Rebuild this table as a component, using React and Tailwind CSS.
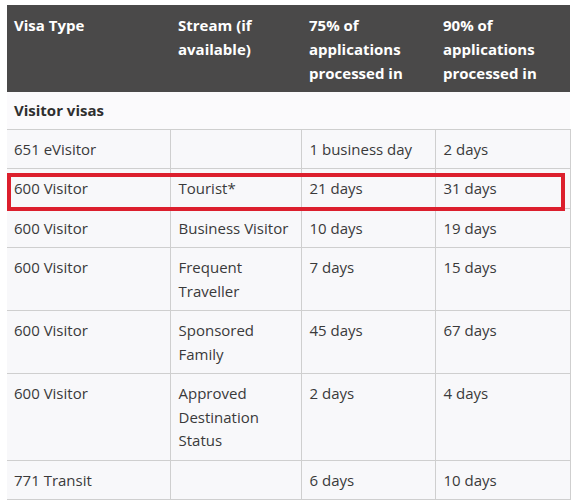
export default function App() {
  const rows = [
    ["651 eVisitor", "", "1 business day", "2 days"],
    ["600 Visitor", "Tourist*", "21 days", "31 days"],
    ["600 Visitor", "Business Visitor", "10 days", "19 days"],
    ["600 Visitor", "Frequent Traveller", "7 days", "15 days"],
    ["600 Visitor", "Sponsored Family", "45 days", "67 days"],
    ["600 Visitor", "Approved Destination Status", "2 days", "4 days"],
    ["771 Transit", "", "6 days", "10 days"],
  ];
  return (
    <div className="w-[572px] h-[503px] bg-white overflow-hidden pt-[5px] pl-[7px]" style={{ fontFamily: '"Open Sans", sans-serif' }}>
      <div className="relative w-[563px]">
        <table className="w-[563px] border-collapse table-fixed text-[15px] leading-[23.5px] text-[#3a3a3a]">
          <colgroup>
            <col className="w-[163px]" />
            <col className="w-[131px]" />
            <col className="w-[134px]" />
            <col className="w-[135px]" />
          </colgroup>
          <thead>
            <tr className="bg-[#4a4949] text-white font-bold align-top leading-6">
              <th className="text-left font-bold pl-[7px] pr-2 pt-2 pb-[7px]">Visa Type</th>
              <th className="text-left font-bold pl-2 pr-2 pt-2 pb-[7px]">Stream (if available)</th>
              <th className="text-left font-bold pl-2 pr-2 pt-2 pb-[7px]">75% of applications processed in</th>
              <th className="text-left font-bold pl-2 pr-2 pt-2 pb-[7px]">90% of applications processed in</th>
            </tr>
          </thead>
          <tbody>
            <tr className="bg-[#fbfafc] border-b border-[#cfcfcf]">
              <td colSpan={4} className="pl-[7px] pt-[7px] pb-[6px] font-bold text-[#2f2f2f]">Visitor visas</td>
            </tr>
            {rows.map((r, i) => (
              <tr key={i} className="bg-[#f8f8fa] border-b border-[#cfcfcf] align-top">
                <td className="pl-[7px] pr-2 pt-2 pb-[7px] border-r border-[#cfcfcf]">{r[0]}</td>
                <td className="pl-2 pr-2 pt-2 pb-[7px] border-r border-[#cfcfcf]">{r[1]}</td>
                <td className="pl-2 pr-2 pt-2 pb-[7px] border-r border-[#cfcfcf]">{r[2]}</td>
                <td className="pl-2 pr-2 pt-2 pb-[7px] border-r border-[#cfcfcf]">{r[3]}</td>
              </tr>
            ))}
          </tbody>
        </table>
        <div className="absolute left-0 top-[168px] w-[558px] h-[38px] border-4 border-[#dc1f2d] pointer-events-none" />
      </div>
    </div>
  );
}
